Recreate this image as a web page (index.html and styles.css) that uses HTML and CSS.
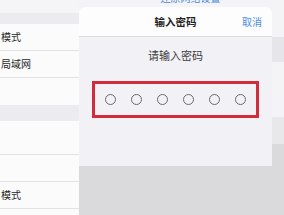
FILE: index.html
```html
<!DOCTYPE html>
<html lang="zh">
<head>
<meta charset="utf-8">
<link rel="stylesheet" href="styles.css">
</head>
<body>
<div class="screen">
  <aside class="sidebar">
    <div class="row r-top"></div>
    <div class="band b1"></div>
    <div class="row r-line"><span class="label">模式</span></div>
    <div class="row r-line"><span class="label">局域网</span></div>
    <div class="row r-plain"></div>
    <div class="band b2"></div>
    <div class="row r-tall r-line"></div>
    <div class="row r-line"></div>
    <div class="row r-line"><span class="label">模式</span></div>
    <div class="row r-rest"></div>
  </aside>
  <main class="detail">
    <div class="d-row d-top"><span class="link">还原网络设置</span></div>
    <div class="d-band d-b1"></div>
    <div class="d-row d-mid"></div>
    <div class="d-band d-b2"></div>
    <div class="d-dim"></div>
    <section class="modal">
      <header class="modal-head">
        <span class="title">输入密码</span>
        <span class="cancel">取消</span>
      </header>
      <div class="modal-body">
        <p class="prompt">请输入密码</p>
        <div class="pin-box">
          <span class="dot"></span><span class="dot"></span><span class="dot"></span><span class="dot"></span><span class="dot"></span><span class="dot"></span>
        </div>
      </div>
    </section>
  </main>
</div>
</body>
</html>
```

FILE: styles.css
```css
* { box-sizing: border-box; margin: 0; padding: 0; }
html, body { width: 284px; height: 215px; overflow: hidden; }
body {
  font-family: "Noto Sans CJK SC", "Noto Sans", sans-serif;
  background: #dadadc;
}
.screen { display: flex; width: 284px; height: 215px; }

.sidebar {
  width: 79px;
  flex: none;
  display: flex;
  flex-direction: column;
  background: #fbfbfc;
}
.row { background: #fbfbfc; display: flex; align-items: center; }
.r-top { height: 13px; background: #f5f5f7; }
.band { background: #ebebf0; }
.b1 { height: 11px; }
.b2 { height: 16px; }
.r-line { height: 27px; border-bottom: 1px solid #e2e2e4; }
.r-tall { height: 34px; }
.r-plain { height: 27px; }
.r-rest { flex: 1; }
.label {
  font-size: 10px;
  line-height: 12px;
  color: #262626;
  padding-left: 1px;
}

.detail {
  position: relative;
  flex: 1;
  display: flex;
  flex-direction: column;
  background: #dadadc;
}
.d-row { background: #f4f4f6; }
.d-top { height: 37px; display: flex; justify-content: center; }
.link {
  font-size: 10px;
  line-height: 12px;
  color: #4a88dc;
  margin-top: -8px;
  margin-left: 18px;
}
.d-b1 { height: 25px; background: #e6e6ea; }
.d-mid { height: 55px; }
.d-b2 { height: 27px; background: #e8e8eb; }
.d-dim { flex: 1; background: #dadadc; }

.modal {
  position: absolute;
  left: 0;
  top: 7px;
  width: 193px;
  height: 159px;
  border-radius: 6px 6px 0 0;
  overflow: hidden;
  background: #f2f2f6;
  display: flex;
  flex-direction: column;
}
.modal-head {
  height: 30px;
  flex: none;
  background: #fdfdfd;
  border-bottom: 1px solid #dcdcde;
  display: flex;
  align-items: center;
  justify-content: center;
  position: relative;
}
.title {
  font-size: 10.5px;
  font-weight: 700;
  color: #222;
  line-height: 14px;
}
.cancel {
  position: absolute;
  right: 10px;
  top: 9px;
  font-size: 10px;
  line-height: 12px;
  color: #4a8ee0;
}
.modal-body {
  flex: 1;
  display: flex;
  flex-direction: column;
  align-items: center;
  padding-top: 11px;
}
.prompt {
  font-size: 11px;
  line-height: 14px;
  color: #3c3c3c;
}
.pin-box {
  margin-top: 19px;
  width: 167px;
  height: 37px;
  border: 3px solid #d22c3c;
  display: flex;
  align-items: center;
  justify-content: center;
  gap: 15px;
}
.dot {
  width: 11px;
  height: 11px;
  border: 1px solid #6a6a6a;
  border-radius: 50%;
}
```
